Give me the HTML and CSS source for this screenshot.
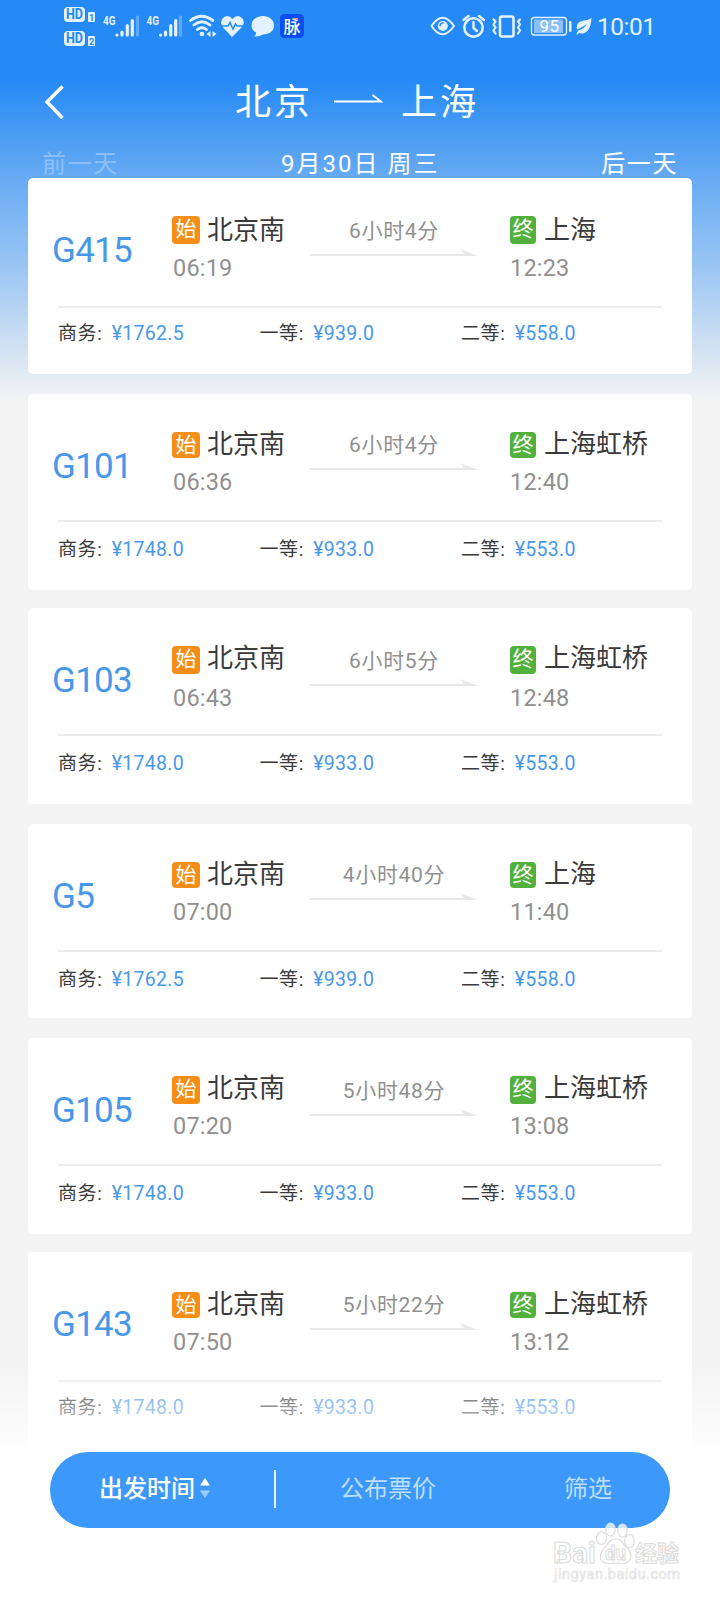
FILE: index.html
```html
<!DOCTYPE html>
<html lang="zh-CN">
<head>
<meta charset="utf-8">
<title>北京 - 上海</title>
<link rel="stylesheet" href="styles.css">
</head>
<body>
<div class="screen">
  <header class="status">
    <svg class="status-left" width="260" height="48" viewBox="0 0 260 48" aria-hidden="true">
      <g fill="#e4f1ff">
        <rect x="0" y="7" width="21" height="15" rx="4"/><rect x="24" y="12" width="7" height="10" rx="1"/>
        <rect x="0" y="31" width="21" height="15" rx="4"/><rect x="24" y="36" width="7" height="10" rx="1"/>
      </g>
      <g class="hd"><text x="2" y="19.300" textLength="17" lengthAdjust="spacingAndGlyphs">HD</text><text x="2" y="43.300" textLength="17" lengthAdjust="spacingAndGlyphs">HD</text></g>
      <g class="sim"><text x="25" y="20.500">1</text><text x="25" y="44.500">2</text></g>
      <g class="net"><text x="39" y="25" textLength="12.500" lengthAdjust="spacingAndGlyphs">4G</text><text x="82.500" y="25" textLength="12.500" lengthAdjust="spacingAndGlyphs">4G</text></g>
      <g stroke="#e4f1ff" stroke-width="3.200" stroke-linecap="round">
        <path d="M53 35v.1M58 32v3M63.300 25.500v9.500M68.300 20.500v14.500M96.500 35v.1M101.500 32v3M106.700 25.500v9.500M111.700 20.500v14.500"/>
        <path d="M73.500 17v18M116.500 17v18" opacity=".3"/>
      </g>
      <g fill="none" stroke="#e4f1ff" stroke-width="2.800" stroke-linecap="round">
        <path d="M126.500 20.500Q137.500 12 149 20.500M129.800 25Q138 18.500 146 25M133.300 29.500Q138 26 142.500 29.500"/>
      </g>
      <circle cx="138" cy="34" r="2.300" fill="#e4f1ff"/>
      <path d="M146.500 31v6l-4-3zM148.500 31v6l4-3z" fill="#e4f1ff"/>
      <path d="M168 37L159.500 28Q155 22 159 18Q164 13.500 168.500 19Q173 13.500 178 18Q182 22 177 28Z" fill="#e4f1ff"/>
      <path d="M157 26h7l2-3.500 3 6.500 2.500-5 1.500 2h7" fill="none" stroke="#258af5" stroke-width="1.500"/>
      <path d="M199 16c6.500 0 11 4 11 9.500S205.500 34 199 34.500Q195.500 37 190 36.500Q192.500 35 192 32.500Q187.500 30 187.500 25.500C187.500 20 192.500 16 199 16Z" fill="#e4f1ff"/>
      <rect x="216" y="14" width="24" height="24" rx="4.500" fill="#0a4df0"/>
      <text class="app" x="219.500" y="32.500">脉</text>
      <path d="M229 18.700h5" stroke="#e99a4d" stroke-width="1.500"/>
    </svg>
    <svg class="status-right" width="144" height="48" viewBox="0 0 144 48" aria-hidden="true">
      <g fill="none" stroke="#e4f1ff" stroke-width="2" stroke-linecap="round" stroke-linejoin="round">
        <path d="M1.500 26Q12.500 9.500 24 26Q12.500 42.500 1.500 26Z"/>
        <circle cx="12.800" cy="26" r="5" fill="#e4f1ff" stroke="none"/><path d="M10 25.500q.5-2.500 3-2.500" stroke="#258af5" stroke-width="1.500"/>
        <circle cx="43.500" cy="27.500" r="9.200" stroke-width="2.600"/><path d="M43.500 22v6l3.500 3M33.500 20l5-4M49 16l5 4" stroke-width="2.400"/>
        <rect x="70" y="16.500" width="13.500" height="20" rx="2" stroke-width="2.600"/>
        <path d="M63.500 19.500l2 2-2 3 2 3-2 3 2 3M90 19.500l-2 2 2 3-2 3 2 3-2 3" stroke-width="2.200"/>
        <rect x="101.500" y="17.500" width="35" height="17.500" rx="3" stroke-width="1.300"/>
      </g>
      <rect x="104" y="19.500" width="29" height="13.500" fill="#8cc0fb"/>
      <rect x="139" y="21" width="2.500" height="11" rx="1" fill="#e4f1ff"/>
      <text class="battery" x="109.500" y="32.300" textLength="19.500">95</text>
    </svg>
    <svg class="leaf" width="16" height="18" viewBox="0 0 16 18" aria-hidden="true"><path d="M15.500 0Q14.500 15 6 15.500L3 15L.8 17Q.3 15.500 2 12.500Q8 11 11 6Q7 9 1 11.500Q-.5 3.500 8 2.500Q12.500 2 15.500 0Z" fill="#e4f1ff"/></svg>
    <span class="clock">10:01</span>
  </header>
  <nav class="route">
    <svg class="back" width="22" height="40" viewBox="0 0 22 40"><path d="M18.500 4.500L3 20l15.500 16" fill="none" stroke="#fff" stroke-width="3.400"/></svg>
    <h1 class="title"><span>北京</span><svg width="49" height="16" viewBox="0 0 49 16"><path d="M0 10.500h47L38.500 4" fill="none" stroke="#fff" stroke-width="1.800"/></svg><span>上海</span></h1>
  </nav>
  <div class="days"><span class="prev">前一天</span><span class="today">9月30日 周三</span><span class="next">后一天</span></div>
  <main class="list">
    <article class="card">
      <div class="trip"><b class="no">G415</b><div class="stop from"><p class="station"><i class="tag start">始</i>北京南</p><time>06:19</time></div><div class="ride"><span>6小时4分</span><svg width="168" height="8" viewBox="0 0 168 8"><path d="M0 6h154L150 1l18 7H0z"/></svg></div><div class="stop to"><p class="station"><i class="tag end">终</i>上海</p><time>12:23</time></div></div>
      <div class="fares"><span>商务: <em>¥1762.5</em></span><span>一等: <em>¥939.0</em></span><span>二等: <em>¥558.0</em></span></div>
    </article>
    <article class="card">
      <div class="trip"><b class="no">G101</b><div class="stop from"><p class="station"><i class="tag start">始</i>北京南</p><time>06:36</time></div><div class="ride"><span>6小时4分</span><svg width="168" height="8" viewBox="0 0 168 8"><path d="M0 6h154L150 1l18 7H0z"/></svg></div><div class="stop to"><p class="station"><i class="tag end">终</i>上海虹桥</p><time>12:40</time></div></div>
      <div class="fares"><span>商务: <em>¥1748.0</em></span><span>一等: <em>¥933.0</em></span><span>二等: <em>¥553.0</em></span></div>
    </article>
    <article class="card">
      <div class="trip"><b class="no">G103</b><div class="stop from"><p class="station"><i class="tag start">始</i>北京南</p><time>06:43</time></div><div class="ride"><span>6小时5分</span><svg width="168" height="8" viewBox="0 0 168 8"><path d="M0 6h154L150 1l18 7H0z"/></svg></div><div class="stop to"><p class="station"><i class="tag end">终</i>上海虹桥</p><time>12:48</time></div></div>
      <div class="fares"><span>商务: <em>¥1748.0</em></span><span>一等: <em>¥933.0</em></span><span>二等: <em>¥553.0</em></span></div>
    </article>
    <article class="card">
      <div class="trip"><b class="no">G5</b><div class="stop from"><p class="station"><i class="tag start">始</i>北京南</p><time>07:00</time></div><div class="ride"><span>4小时40分</span><svg width="168" height="8" viewBox="0 0 168 8"><path d="M0 6h154L150 1l18 7H0z"/></svg></div><div class="stop to"><p class="station"><i class="tag end">终</i>上海</p><time>11:40</time></div></div>
      <div class="fares"><span>商务: <em>¥1762.5</em></span><span>一等: <em>¥939.0</em></span><span>二等: <em>¥558.0</em></span></div>
    </article>
    <article class="card">
      <div class="trip"><b class="no">G105</b><div class="stop from"><p class="station"><i class="tag start">始</i>北京南</p><time>07:20</time></div><div class="ride"><span>5小时48分</span><svg width="168" height="8" viewBox="0 0 168 8"><path d="M0 6h154L150 1l18 7H0z"/></svg></div><div class="stop to"><p class="station"><i class="tag end">终</i>上海虹桥</p><time>13:08</time></div></div>
      <div class="fares"><span>商务: <em>¥1748.0</em></span><span>一等: <em>¥933.0</em></span><span>二等: <em>¥553.0</em></span></div>
    </article>
    <article class="card">
      <div class="trip"><b class="no">G143</b><div class="stop from"><p class="station"><i class="tag start">始</i>北京南</p><time>07:50</time></div><div class="ride"><span>5小时22分</span><svg width="168" height="8" viewBox="0 0 168 8"><path d="M0 6h154L150 1l18 7H0z"/></svg></div><div class="stop to"><p class="station"><i class="tag end">终</i>上海虹桥</p><time>13:12</time></div></div>
      <div class="fares"><span>商务: <em>¥1748.0</em></span><span>一等: <em>¥933.0</em></span><span>二等: <em>¥553.0</em></span></div>
    </article>
  </main>
  <footer class="dock">
    <div class="bar">
      <span class="sort">出发时间<svg width="10" height="20" viewBox="0 0 10 20"><path d="M0 7.500L5 0l5 7.500z" fill="#fff"/><path d="M0 12.500h10L5 20z" fill="#9dccfb"/></svg></span>
      <span class="fare-filter">公布票价</span>
      <span class="filter">筛选</span>
    </div>
  </footer>
  <svg class="mark" width="136" height="64" viewBox="0 0 136 64" aria-hidden="true">
    <g fill="#fff" fill-opacity=".75" stroke="#dcdcdc" stroke-width="1.200">
      <ellipse cx="53.500" cy="18" rx="5" ry="6.500"/><ellipse cx="62.500" cy="9.500" rx="4.700" ry="6.500"/><ellipse cx="74.500" cy="10.500" rx="4.700" ry="6.500"/><ellipse cx="81.500" cy="21" rx="4.800" ry="6.500"/>
      <path d="M67.500 19Q73 19 76 25Q85 32 82.500 39Q80 45 67 43Q55 45 52.500 39Q51 32 59 25Q62 19 67.500 19Z"/>
    </g>
    <g class="mark-text">
      <text x="5" y="42.500" font-size="29" textLength="43" lengthAdjust="spacingAndGlyphs">Bai</text>
      <text x="57" y="40" font-size="20" textLength="21" lengthAdjust="spacingAndGlyphs">du</text>
      <text x="87" y="41" font-size="22" textLength="44">经验</text>
      <text class="url" x="6" y="59" font-size="14.500" textLength="126">jingyan.baidu.com</text>
    </g>
  </svg>
</div>
</body>
</html>
```
FILE: styles.css
```css
* { box-sizing: border-box; }
body { margin: 0; font-family: Roboto, "Noto Sans CJK SC", sans-serif; }
.screen {
  position: relative;
  width: 720px;
  height: 1600px;
  overflow: hidden;
  background: linear-gradient(#258af5 0, #258af5 80px, #62a8f3 170px, #9cc7f4 270px, #d3e2f3 350px, #f4f4f4 402px);
}
.status { display: flex; height: 64px; padding-left: 64px; color: #e4f1ff; }
.status-left { flex: none; margin-right: 106px; }
.status-right { flex: none; }
.leaf { margin: 18px 0 0 2px; flex: none; }
.clock { font-size: 24.500px; line-height: 54px; margin-left: 5px; letter-spacing: -0.500px; }
.hd text { font: 700 14px Roboto, sans-serif; fill: #258af5; }
.sim text { font: 700 9px Roboto, sans-serif; fill: #258af5; }
.net text { font: 700 13px Roboto, sans-serif; fill: #e4f1ff; }
.app { font: 500 17px "Noto Sans CJK SC", sans-serif; fill: #fff; }
.battery { font: 17px Roboto, sans-serif; fill: #fff; }

.route { display: grid; grid-template-columns: 191px 1fr; height: 80px; padding: 18px 0 0 44px; color: #fff; }
.title { display: flex; margin: 2px 0 0; font-size: 36px; font-weight: 400; line-height: 38px; letter-spacing: 3px; }
.title svg { margin: 7px 18px 0 21px; }
.days { display: grid; grid-template-columns: 239px 1fr auto; height: 34px; padding: 4px 42px 0 42px; color: #fff; font-size: 24px; line-height: 32px; letter-spacing: 1.600px; }
.today { letter-spacing: 2px; }
.prev { color: #8cc1fa; }

.list { display: grid; padding: 0 28px; }
.card {
  --trip: 128px;
  --stop: 28px;
  --ride: 36px;
  --tag-top: 10px;
  --tag-size: 26px;
  --time-gap: 3px;
  height: 196px;
  margin-bottom: 18px;
  padding: 0 30px;
  border-radius: 5px;
  background: #fff;
}
.card:nth-child(1) { --trip: 130px; --stop: 30px; --ride: 38px; --tag-top: 8px; --tag-size: 28px; margin-bottom: 20px; }
.card:nth-child(3) { --ride: 38px; --tag-size: 28px; --time-gap: 5px; margin-bottom: 20px; }
.card:nth-child(4) { height: 194px; margin-bottom: 20px; }
.card:nth-child(5) { --ride: 38px; --tag-size: 28px; }
.card:nth-child(6) { --trip: 130px; --stop: 30px; --ride: 38px; }
.trip { display: grid; grid-template-columns: 114px 138px 200px 1fr; height: var(--trip); border-bottom: 2px solid #ededed; }
.no { margin-left: -6px; padding-top: 53px; font-size: 35px; font-weight: 400; line-height: 40px; color: #4898ea; letter-spacing: -.7px; }
.stop { padding-top: var(--stop); white-space: nowrap; }
.station { display: flex; align-items: flex-start; height: 38px; margin: 0; color: #3a3a3a; font-size: 26px; line-height: 45px; }
.tag { display: block; width: 28px; height: var(--tag-size); margin: var(--tag-top) 7px 0 0; border-radius: 4px; color: #fff; font-size: 21px; font-style: normal; line-height: 26px; text-align: center; }
.start { background: #f68d17; }
.end { width: 26px; background: #52b13d; margin-right: 8px; }
.stop time { display: block; margin-top: var(--time-gap); padding-left: 1px; font-size: 23.500px; line-height: 38px; color: #909090; letter-spacing: 0.200px; }
.to time { padding-left: 0; }
.ride { width: 168px; padding-top: var(--ride); color: #909090; text-align: center; font-size: 21px; line-height: 30px; letter-spacing: .7px; }
.ride span { display: block; }
.ride svg { display: block; margin-top: 2px; fill: #e8e8e8; }
.fares { display: grid; grid-template-columns: 201.500px 201.500px 1fr; padding-top: calc(141px - var(--trip)); font-size: 19px; line-height: 30px; color: #3a3a3a; letter-spacing: .6px; }
.fares em { margin-left: 4px; color: #4898ea; font-size: 19.500px; font-style: normal; letter-spacing: .300px; }

.dock { position: absolute; inset: 1362px 0 0; padding: 90px 50px 0; background: linear-gradient(#fff0 0, #fffc 80px, #fff 90px); }
.bar { display: grid; grid-template-columns: 225px 227px 1fr; height: 76px; border-radius: 38px; background: #3c98fb; color: #bfdfff; font-size: 24px; line-height: 74px; }
.sort { position: relative; display: flex; align-items: center; height: 74px; padding-left: 49px; color: #fff; font-weight: 500; }
.sort svg { margin: 0 0 2px 5px; }
.sort::after { content: ""; position: absolute; right: -1px; top: 18px; width: 2px; height: 38px; background: #e4f1ff; }
.fare-filter { padding-left: 65px; }
.filter { padding-left: 62px; }
.mark { position: absolute; left: 548px; top: 1520px; }
.mark-text { font-family: Roboto, "Noto Sans CJK SC", sans-serif; font-weight: 700; fill: #fff; stroke: #dcdcdc; stroke-width: 1px; }
.url { font-weight: 400; fill: #fff; stroke: #e2e2e2; stroke-width: .7px; }
```
